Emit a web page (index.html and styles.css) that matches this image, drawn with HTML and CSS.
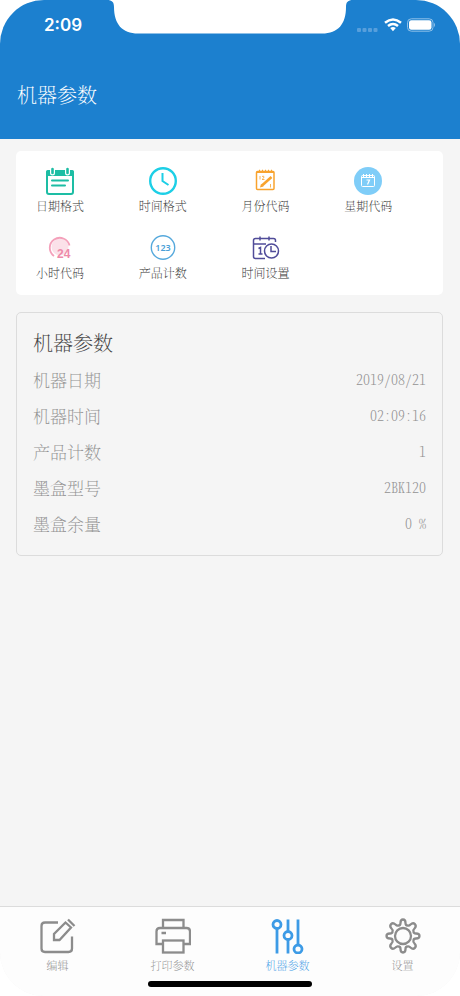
FILE: index.html
```html
<!DOCTYPE html>
<html lang="zh-CN">
<head>
<meta charset="utf-8">
<meta name="viewport" content="width=device-width, initial-scale=1">
<title>机器参数</title>
<link rel="stylesheet" href="styles.css">
</head>
<body>
<div class="app">
  <header class="header">
    <svg class="notch" width="246" height="34" viewBox="0 0 246 34" aria-hidden="true"><path fill="#fff" d="M0 0C5 0 7 2 7 7C7 24 15 33.500 31 33.500H215C231 33.500 239 24 239 7C239 2 241 0 246 0Z"/></svg>
    <div class="status">
      <span class="time">2:09</span>
      <div class="status-icons">
        <svg width="22" height="14" viewBox="0 0 22 14" fill="#579fdc" aria-hidden="true"><rect x="0" y="10" width="4" height="4" rx="1"/><rect x="5.500" y="10" width="4" height="4" rx="1"/><rect x="11" y="10" width="4" height="4" rx="1"/><rect x="16.500" y="10" width="4" height="4" rx="1"/></svg>
        <svg width="18" height="14" viewBox="0 0 18 14" aria-hidden="true"><g fill="none" stroke="#fff" stroke-width="2.500"><path d="M1 4.800Q9-1.800 17 4.800"/><path d="M4 8Q9 3.900 14 8"/></g><path fill="#fff" d="M6.200 10Q9 8 11.800 10L9 13.200Z"/></svg>
        <svg width="29" height="14" viewBox="0 0 29 14" aria-hidden="true"><rect x=".5" y=".8" width="25.500" height="12.400" rx="3.800" fill="none" stroke="#8fc0e8"/><rect x="2" y="2.300" width="22.500" height="9.400" rx="2.300" fill="#fff"/><path d="M27 4.800Q29 7 27 9.200Z" fill="#8fc0e8"/></svg>
      </div>
    </div>
    <h1 class="title">机器参数</h1>
  </header>

  <main class="content">
    <section class="shortcuts" aria-label="快捷设置">
      <button type="button" class="shortcut">
        <svg viewBox="0 0 28 28" aria-hidden="true"><rect x="1" y="4" width="26" height="23" rx="2" fill="none" stroke="#1dbda4" stroke-width="2"/><path d="M0 4.500Q0 3 2 3H26Q28 3 28 4.500V9H0Z" fill="#1dbda4"/><g stroke-linecap="round"><path d="M6.500 2.500V6M21.500 2.500V6" stroke="#fff" stroke-width="5"/><path d="M6.500 2V6M21.500 2V6" stroke="#1dbda4" stroke-width="2.600"/><path d="M6 13.500H22M6 18.500H19" stroke="#1dbda4" stroke-width="2"/></g></svg>
        <span>日期格式</span>
      </button>
      <button type="button" class="shortcut">
        <svg viewBox="0 0 28 28" aria-hidden="true"><g fill="none" stroke="#1dcfe6"><circle cx="14" cy="14" r="12.800" stroke-width="2.400"/><path d="M13.500 6V14L19.500 18" stroke-width="2"/></g></svg>
        <span>时间格式</span>
      </button>
      <button type="button" class="shortcut">
        <svg viewBox="0 0 28 28" aria-hidden="true"><g fill="none" stroke="#f8a32e"><rect x="4.500" y="4.500" width="17.500" height="18" rx="1" stroke-width="1.500"/><path d="M7.500 2.800V6M10.500 2.800V6M13.500 2.800V6M16.500 2.800V6M19.500 2.800V6M4.500 5.500H22" stroke-width="1.200"/><path d="M10 18.500L19.500 10" stroke-width="2.600"/><path d="M8 9V12.500M10 9.500Q12 8.500 12 10Q12 11 10 12.500H12.500M18.500 17V20.500" stroke-width=".8"/></g><path d="M8 20.500L9 16.800L11.500 19.500Z" fill="#f8a32e"/></svg>
        <span>月份代码</span>
      </button>
      <button type="button" class="shortcut">
        <svg viewBox="0 0 28 28" aria-hidden="true"><circle cx="14" cy="14" r="14" fill="#7fcdf8"/><g fill="none" stroke="#fff"><rect x="7.500" y="8.500" width="13" height="11" rx="1"/><path d="M8 10.500H20M9.500 7V10M12.500 7V10M15.500 7V10M18.500 7V10" stroke-width="1"/><path d="M12.500 13H15.500L13.500 17.500" stroke-width="1.200"/></g></svg>
        <span>星期代码</span>
      </button>
      <button type="button" class="shortcut">
        <svg viewBox="0 0 28 28" aria-hidden="true"><circle cx="14" cy="13" r="8.500" fill="#fbe1e9"/><path d="M8 22A10 10 0 1 1 23.500 11.500" fill="none" stroke="#f4a0ba" stroke-width="1.800"/><text x="11" y="23.500" class="hour-digits">24</text></svg>
        <span>小时代码</span>
      </button>
      <button type="button" class="shortcut">
        <svg viewBox="0 0 28 28" aria-hidden="true"><circle cx="14" cy="13.500" r="11.700" fill="none" stroke="#56a9dc" stroke-width="1.400"/><text x="14" y="17" class="count-digits">123</text></svg>
        <span>产品计数</span>
      </button>
      <button type="button" class="shortcut">
        <svg viewBox="0 0 28 28" aria-hidden="true"><g fill="none" stroke="#504c99" stroke-width="1.500"><path d="M13 24.500H3.500Q1.500 24.500 1.500 22.500V6.500Q1.500 4.500 3.500 4.500H21.500Q23.500 4.500 23.500 6.500V8M1.500 10H14M8 2.500V6.500M17 2.500V6.500"/><circle cx="19.500" cy="17" r="7"/><path d="M19 12V17.500H24"/><path d="M6.500 14.500L8.500 13.500V20M6.500 20H10.500"/></g></svg>
        <span>时间设置</span>
      </button>
    </section>

    <section class="params">
      <h2 class="params-title">机器参数</h2>
      <dl class="params-list">
        <div class="row"><dt>机器日期</dt><dd>2019/08/21</dd></div>
        <div class="row"><dt>机器时间</dt><dd>02:09:16</dd></div>
        <div class="row"><dt>产品计数</dt><dd>1</dd></div>
        <div class="row"><dt>墨盒型号</dt><dd>2BK120</dd></div>
        <div class="row"><dt>墨盒余量</dt><dd>0 %</dd></div>
      </dl>
    </section>
  </main>

  <nav class="tabs">
    <a class="tab" href="#edit">
      <svg viewBox="0 0 36 36" aria-hidden="true"><g fill="none" stroke="currentColor" stroke-width="2.300"><path d="M18 4.500H5Q1.500 4.500 1.500 8V30.500Q1.500 34 5 34H28.500Q32 34 32 30.500V18.500"/><path d="M14 22V16L25.500 4.500L31 9.500L19.500 22Z"/><path d="M28 1.500L34.500 8"/></g></svg>
      <span>编辑</span>
    </a>
    <a class="tab" href="#print">
      <svg viewBox="0 0 36 36" aria-hidden="true"><g fill="none" stroke="currentColor" stroke-width="2.300"><path d="M8 10V2H28.500V10"/><path d="M8 26H1.500V13.500Q1.500 10 5 10H31.500Q35 10 35 13.500V26H28.500"/><rect x="8" y="22.500" width="20.500" height="12"/><path d="M6.500 15H11"/></g></svg>
      <span>打印参数</span>
    </a>
    <a class="tab tab-active" href="#machine" aria-current="page">
      <svg viewBox="0 0 36 36" aria-hidden="true"><g fill="none" stroke="currentColor" stroke-width="2.800"><circle cx="7" cy="6.500" r="4"/><path d="M7 10.500V35.500M18 1.500V13.500M18 21.500V35.500M28 1.500V27"/><circle cx="18" cy="17.500" r="4"/><circle cx="28" cy="31" r="4"/></g></svg>
      <span>机器参数</span>
    </a>
    <a class="tab" href="#settings">
      <svg viewBox="0 0 36 36" aria-hidden="true"><g fill="none" stroke="currentColor" stroke-width="2.300" stroke-linejoin="round"><circle cx="18" cy="18" r="8"/><path d="M15.500 5Q15.500 1.500 18 1.500Q20.500 1.500 20.500 5Q20.500 7.500 22.500 7.500Q24 8.200 25.500 6.500Q28 4.200 29.900 6.100Q31.800 8 29.500 10.500Q27.800 12 28.500 13.500Q28.500 15.500 31 15.500Q34.500 15.500 34.500 18Q34.500 20.500 31 20.500Q28.500 20.500 28.500 22.500Q27.800 24 29.500 25.500Q31.800 28 29.900 29.900Q28 31.800 25.500 29.500Q24 27.800 22.500 28.500Q20.500 28.500 20.500 31Q20.500 34.500 18 34.500Q15.500 34.500 15.500 31Q15.500 28.500 13.500 28.500Q12 27.800 10.500 29.500Q8 31.800 6.100 29.900Q4.200 28 6.500 25.500Q8.200 24 7.500 22.500Q7.500 20.500 5 20.500Q1.500 20.500 1.500 18Q1.500 15.500 5 15.500Q7.500 15.500 7.500 13.500Q8.200 12 6.500 10.500Q4.200 8 6.100 6.100Q8 4.200 10.500 6.500Q12 8.200 13.500 7.500Q15.500 7.500 15.500 5Z"/></g></svg>
      <span>设置</span>
    </a>
    <div class="home-bar"></div>
  </nav>
</div>
</body>
</html>
```
FILE: styles.css
```css
* {
  box-sizing: border-box;
}

body {
  margin: 0;
  background: #fff;
  font-family: "Noto Serif CJK SC", "Noto Sans CJK SC", serif;
  font-weight: 200;
}

.app {
  display: flex;
  flex-direction: column;
  min-height: 100vh;
  overflow: hidden;
  border-radius: 44px;
  background: #f5f5f5;
}

.header {
  position: relative;
  padding-bottom: 30px;
  background: #1c80cf;
  color: #fff;
}

.notch {
  position: absolute;
  top: 0;
  left: 50%;
  transform: translateX(-50%);
}

.status {
  display: flex;
  align-items: center;
  justify-content: space-between;
  height: 50px;
  padding: 0 24px 0 44px;
}

.time {
  font: 600 17px/24px Inter, sans-serif;
}

.status-icons {
  display: flex;
  gap: 5px;
}

.title {
  margin: 30px 17px 0;
  font-size: 20px;
  font-weight: 200;
  line-height: 29px;
}

.content {
  flex: 1;
  display: flex;
  flex-direction: column;
  gap: 17px;
  padding: 12px 17px 16px 16px;
}

.shortcuts {
  display: grid;
  grid-template-columns: repeat(4, 1fr);
  row-gap: 20px;
  padding: 16px 0 14px 16px;
  border-radius: 5px;
  background: #fff;
}

.shortcut {
  display: flex;
  flex-direction: column;
  align-items: center;
  justify-self: start;
  gap: 3px;
  padding: 0 4px;
  border: 0;
  background: none;
  color: #333;
  font: inherit;
  font-size: 12px;
  line-height: 16px;
}

.shortcut svg {
  width: 28px;
  height: 28px;
}

.hour-digits {
  fill: #ee8aaa;
  font: 700 12px "Liberation Sans", sans-serif;
}

.count-digits {
  fill: #4a9fd8;
  font: 600 9px "Noto Sans", sans-serif;
  text-anchor: middle;
}

.params {
  padding: 16px 16px 14px;
  border: 1px solid #dcdcdc;
  border-radius: 5px;
}

.params-title {
  margin: 0 0 4px;
  color: #444;
  font-size: 20px;
  font-weight: 200;
  line-height: 28px;
}

.params-list {
  margin: 0;
}

.row {
  display: flex;
  align-items: center;
  justify-content: space-between;
  height: 36px;
  color: #929292;
}

.row dt {
  font-size: 17px;
}

.row dd {
  margin: 0;
  font-size: 14px;
  font-feature-settings: "hwid";
}

.tabs {
  display: grid;
  grid-template-columns: repeat(4, 1fr);
  justify-items: center;
  padding: 11px 0 9px;
  border-top: 1px solid #dcdcdc;
  background: #fdfdfd;
}

.tab {
  display: flex;
  flex-direction: column;
  align-items: center;
  gap: 3px;
  color: #8c8c8c;
  font-size: 11px;
  line-height: 16px;
  text-decoration: none;
}

.tab svg {
  width: 36px;
  height: 36px;
}

.tab-active {
  color: #3d9be6;
}

.home-bar {
  grid-column: 1 / -1;
  width: 164px;
  height: 6px;
  margin-top: 8px;
  border-radius: 3px;
  background: #000;
}
```
